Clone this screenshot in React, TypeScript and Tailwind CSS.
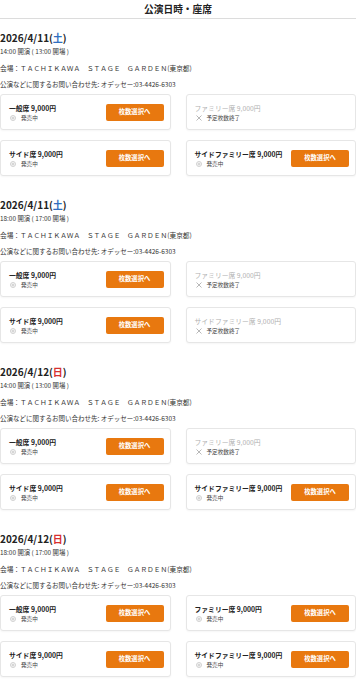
type Seat = { name: string; open: boolean };

type Show = { day: string; wd: string; wdColor: string; time: string; seats: Seat[] };

const shows: Show[] = [
  {
    day: "2026/4/11",
    wd: "土",
    wdColor: "text-[#2f6fc0]",
    time: "14:00 開演 ( 13:00 開場 )",
    seats: [
      { name: "一般席 9,000円", open: true },
      { name: "ファミリー席 9,000円", open: false },
      { name: "サイド席 9,000円", open: true },
      { name: "サイドファミリー席 9,000円", open: true },
    ],
  },
  {
    day: "2026/4/11",
    wd: "土",
    wdColor: "text-[#2f6fc0]",
    time: "18:00 開演 ( 17:00 開場 )",
    seats: [
      { name: "一般席 9,000円", open: true },
      { name: "ファミリー席 9,000円", open: false },
      { name: "サイド席 9,000円", open: true },
      { name: "サイドファミリー席 9,000円", open: false },
    ],
  },
  {
    day: "2026/4/12",
    wd: "日",
    wdColor: "text-[#d63030]",
    time: "14:00 開演 ( 13:00 開場 )",
    seats: [
      { name: "一般席 9,000円", open: true },
      { name: "ファミリー席 9,000円", open: false },
      { name: "サイド席 9,000円", open: true },
      { name: "サイドファミリー席 9,000円", open: true },
    ],
  },
  {
    day: "2026/4/12",
    wd: "日",
    wdColor: "text-[#d63030]",
    time: "18:00 開演 ( 17:00 開場 )",
    seats: [
      { name: "一般席 9,000円", open: true },
      { name: "ファミリー席 9,000円", open: true },
      { name: "サイド席 9,000円", open: true },
      { name: "サイドファミリー席 9,000円", open: true },
    ],
  },
];

function OnSaleIcon() {
  return (
    <svg width="6" height="6" viewBox="0 0 6 6" className="shrink-0">
      <circle cx="3" cy="3" r="2.5" fill="none" stroke="#c4c4c4" strokeWidth="0.8" />
      <circle cx="3" cy="3" r="1.5" fill="#d6d6d6" />
    </svg>
  );
}

function SoldOutIcon() {
  return (
    <svg width="6" height="6" viewBox="0 0 6 6" className="shrink-0">
      <path d="M0.5 0.5 L5.5 5.5 M5.5 0.5 L0.5 5.5" stroke="#9a9a9a" strokeWidth="0.7" />
    </svg>
  );
}

function SeatCard({ seat }: { seat: Seat }) {
  return (
    <div className="flex h-[36px] items-center justify-between rounded-[3px] border border-[#e6e6e6] bg-white pl-[8px] pr-[6px] shadow-[0_1px_2px_rgba(0,0,0,0.04)]">
      <div className="flex flex-col gap-[1px]">
        {seat.open ? (
          <div className="text-[6.8px] leading-[10px] font-bold text-[#222]">{seat.name}</div>
        ) : (
          <div className="text-[6.8px] leading-[10px] text-[#b0b0b0]">{seat.name}</div>
        )}
        <div className="flex items-center gap-[5px] pl-[1px] text-[5.6px] leading-[8px] text-[#444]">
          {seat.open ? <OnSaleIcon /> : <SoldOutIcon />}
          <span>{seat.open ? "発売中" : "予定枚数終了"}</span>
        </div>
      </div>
      {seat.open && (
        <button
          type="button"
          className="flex h-[17px] w-[58px] items-center justify-center rounded-[2px] bg-[#e8780f] text-[6.3px] font-bold text-white"
        >
          枚数選択へ
        </button>
      )}
    </div>
  );
}

export default function App() {
  return (
    <div
      className="min-h-[680px] bg-white text-[#333]"
      style={{ fontFamily: '"Noto Sans CJK JP", sans-serif' }}
    >
      {/* Header */}
      <header className="h-[19px] border-b border-[#dcdcdc] text-center text-[9.7px] leading-[18px] font-bold text-[#222]">
        公演日時・座席
      </header>

      <main className="flex flex-col gap-[21px] pt-[11px]">
        {shows.map((s, i) => (
          <section key={i}>
            <h2 className="text-[10px] leading-[16px] font-bold text-[#222]">
              {s.day}(<span className={s.wdColor}>{s.wd}</span>)
            </h2>
            <div className="mt-[1px] text-[6.4px] leading-[10px]">{s.time}</div>
            <div className="mt-[6px] text-[6.7px] leading-[10px]">
              会場：ＴＡＣＨＩＫＡＷＡ　ＳＴＡＧＥ　ＧＡＲＤＥＮ(東京都)
            </div>
            <div className="mt-[6px] text-[6.5px] leading-[10px]">
              公演などに関するお問い合わせ先: オデッセー:03-4426-6303
            </div>
            <div className="mt-[5px] grid grid-cols-2 gap-x-[15px] gap-y-[10px]">
              {s.seats.map((seat, j) => (
                <SeatCard key={j} seat={seat} />
              ))}
            </div>
          </section>
        ))}
      </main>
    </div>
  );
}
